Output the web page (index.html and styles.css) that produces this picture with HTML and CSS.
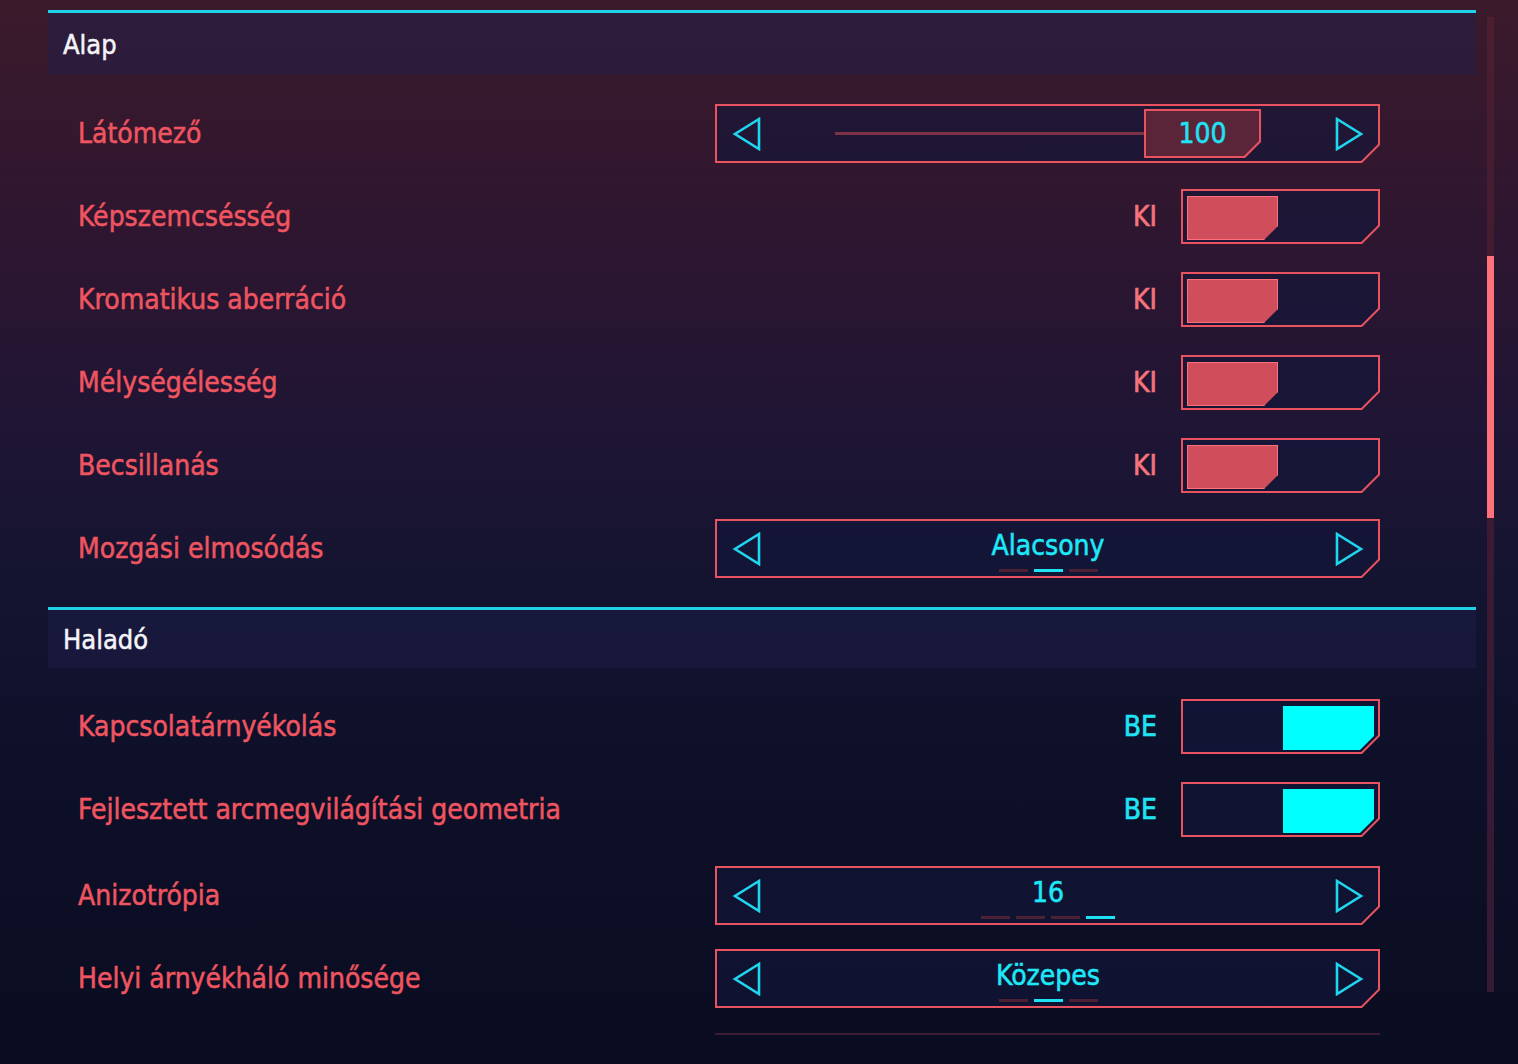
FILE: index.html
```html
<!DOCTYPE html>
<html lang="hu">
  <head>
    <meta charset="UTF-8" />
    <meta name="viewport" content="width=device-width, initial-scale=1.0" />
    <title>Grafika beállítások</title>
    <link rel="stylesheet" href="styles.css">
  </head>
  <body>
    <div class="screen">
      <div class="panel">
        <section class="group">
          <h2 class="group-title">Alap</h2>
          <div class="rows">
            <div class="row">
              <span class="label">Látómező</span>
              <div class="frame wide">
                <div class="frame-inner picker">
                  <svg class="arrow" viewBox="0 0 30 34"><polygon points="27,2 3,17 27,32" /></svg>
                  <div class="slider">
                    <div class="slider-line"></div>
                    <div class="thumb"><div class="thumb-inner">100</div></div>
                  </div>
                  <svg class="arrow" viewBox="0 0 30 34"><polygon points="3,2 27,17 3,32" /></svg>
                </div>
              </div>
            </div>
            <div class="row">
              <span class="label">Képszemcsésség</span>
              <span class="state">KI</span>
              <div class="frame toggle">
                <div class="frame-inner switch"><div class="knob"></div></div>
              </div>
            </div>
            <div class="row">
              <span class="label">Kromatikus aberráció</span>
              <span class="state">KI</span>
              <div class="frame toggle">
                <div class="frame-inner switch"><div class="knob"></div></div>
              </div>
            </div>
            <div class="row">
              <span class="label">Mélységélesség</span>
              <span class="state">KI</span>
              <div class="frame toggle">
                <div class="frame-inner switch"><div class="knob"></div></div>
              </div>
            </div>
            <div class="row">
              <span class="label">Becsillanás</span>
              <span class="state">KI</span>
              <div class="frame toggle">
                <div class="frame-inner switch"><div class="knob"></div></div>
              </div>
            </div>
            <div class="row">
              <span class="label">Mozgási elmosódás</span>
              <div class="frame wide">
                <div class="frame-inner picker">
                  <svg class="arrow" viewBox="0 0 30 34"><polygon points="27,2 3,17 27,32" /></svg>
                  <div class="choice">
                    <span class="value">Alacsony</span>
                    <div class="dashes"><i></i><i class="on"></i><i></i></div>
                  </div>
                  <svg class="arrow" viewBox="0 0 30 34"><polygon points="3,2 27,17 3,32" /></svg>
                </div>
              </div>
            </div>
          </div>
        </section>

        <section class="group">
          <h2 class="group-title small">Haladó</h2>
          <div class="rows">
            <div class="row">
              <span class="label">Kapcsolatárnyékolás</span>
              <span class="state on">BE</span>
              <div class="frame toggle">
                <div class="frame-inner switch on"><div class="knob"></div></div>
              </div>
            </div>
            <div class="row">
              <span class="label">Fejlesztett arcmegvilágítási geometria</span>
              <span class="state on">BE</span>
              <div class="frame toggle">
                <div class="frame-inner switch on"><div class="knob"></div></div>
              </div>
            </div>
            <div class="row tall">
              <span class="label">Anizotrópia</span>
              <div class="frame wide">
                <div class="frame-inner picker">
                  <svg class="arrow" viewBox="0 0 30 34"><polygon points="27,2 3,17 27,32" /></svg>
                  <div class="choice">
                    <span class="value">16</span>
                    <div class="dashes"><i></i><i></i><i></i><i class="on"></i></div>
                  </div>
                  <svg class="arrow" viewBox="0 0 30 34"><polygon points="3,2 27,17 3,32" /></svg>
                </div>
              </div>
            </div>
            <div class="row">
              <span class="label">Helyi árnyékháló minősége</span>
              <div class="frame wide">
                <div class="frame-inner picker">
                  <svg class="arrow" viewBox="0 0 30 34"><polygon points="27,2 3,17 27,32" /></svg>
                  <div class="choice">
                    <span class="value">Közepes</span>
                    <div class="dashes"><i></i><i class="on"></i><i></i></div>
                  </div>
                  <svg class="arrow" viewBox="0 0 30 34"><polygon points="3,2 27,17 3,32" /></svg>
                </div>
              </div>
            </div>
            <div class="row ghost">
              <div class="ghost-line"></div>
            </div>
          </div>
        </section>
      </div>

      <div class="scrollbar">
        <div class="scroll-thumb"></div>
      </div>
    </div>
  </body>
</html>
```

FILE: styles.css
```css
* {
  margin: 0;
  padding: 0;
  box-sizing: border-box;
}
html, body {
  height: 100%;
  overflow: hidden;
}
body {
  font-family: "DejaVu Sans Condensed", "Noto Sans", sans-serif;
  background: linear-gradient(180deg, #3b1a2b 0%, #2e1630 22%, #1f1534 40%, #131430 56%, #0e1029 72%, #0a0c21 100%) fixed;
  color: #fff;
}
.screen {
  display: flex;
  padding-left: 48px;
}
.panel {
  width: 1428px;
  padding-top: 10px;
}
.group-title {
  height: 65px;
  display: flex;
  align-items: center;
  padding-left: 15px;
  border-top: 3px solid #1fd2e8;
  background: rgba(30, 32, 78, 0.45);
  font-size: 27px;
  font-weight: normal;
  -webkit-text-stroke: 0.5px currentColor;
  color: #f4f4f8;
}
.group-title.small {
  height: 61px;
}
.rows {
  padding: 17px 0 17px;
}
.row {
  height: 83px;
  display: flex;
  align-items: center;
  padding-left: 30px;
  padding-right: 96px;
}
.row.tall {
  height: 86px;
  padding-top: 3px;
}
.label {
  flex: 1;
  font-size: 28px;
  -webkit-text-stroke: 0.5px currentColor;
  color: #ef5560;
}
.state {
  font-size: 28px;
  -webkit-text-stroke: 0.6px currentColor;
  color: #f4747c;
  margin-right: 24px;
}
.state.on {
  color: #1fe3f5;
}

/* chamfered frames */
.frame {
  background: #e9525f;
  padding: 2px;
  clip-path: polygon(0 0, 100% 0, 100% calc(100% - 18px), calc(100% - 18px) 100%, 0 100%);
}
.frame-inner {
  height: 100%;
  background:
    linear-gradient(rgba(18, 22, 58, 0.6), rgba(18, 22, 58, 0.6)) fixed,
    linear-gradient(180deg, #3b1a2b 0%, #2e1630 22%, #1f1534 40%, #131430 56%, #0e1029 72%, #0a0c21 100%) fixed;
  clip-path: polygon(0 0, 100% 0, 100% calc(100% - 17px), calc(100% - 17px) 100%, 0 100%);
}
.frame.wide {
  width: 665px;
  height: 59px;
}
.frame.toggle {
  width: 199px;
  height: 55px;
}

.picker {
  display: flex;
  align-items: center;
  padding: 0 14px 0 15px;
}
.arrow {
  width: 30px;
  height: 34px;
  flex-shrink: 0;
}
.arrow polygon {
  fill: none;
  stroke: #1fd6ee;
  stroke-width: 2.6;
}

.slider {
  flex: 1;
  display: flex;
  align-items: center;
  margin: 0 73px;
}
.slider-line {
  flex: 1;
  height: 3px;
  background: #7e3246;
}
.thumb {
  width: 117px;
  height: 49px;
  padding: 2px;
  background: #e9525f;
  clip-path: polygon(0 0, 100% 0, 100% calc(100% - 16px), calc(100% - 16px) 100%, 0 100%);
}
.thumb-inner {
  height: 100%;
  display: flex;
  align-items: center;
  justify-content: center;
  background: #5a2439;
  clip-path: polygon(0 0, 100% 0, 100% calc(100% - 15px), calc(100% - 15px) 100%, 0 100%);
  font-size: 28px;
  -webkit-text-stroke: 0.5px currentColor;
  color: #1fe3f5;
}

.choice {
  flex: 1;
  display: flex;
  flex-direction: column;
  align-items: center;
  padding-top: 2px;
}
.value {
  font-size: 28px;
  line-height: 36px;
  -webkit-text-stroke: 0.5px currentColor;
  color: #1fe8f8;
}
.dashes {
  display: flex;
  gap: 6px;
  margin-top: 5px;
}
.dashes i {
  width: 29px;
  height: 3px;
  background: #4d2036;
}
.dashes i.on {
  background: #1fe3f5;
}

.switch {
  display: flex;
  padding: 5px 4px 2px 4px;
}
.knob {
  width: 91px;
  height: 44px;
  background: #d04d5b;
  border: 1px solid #ff707a;
  clip-path: polygon(0 0, 100% 0, 100% calc(100% - 14px), calc(100% - 14px) 100%, 0 100%);
}
.switch.on {
  justify-content: flex-end;
}
.switch.on .knob {
  background: #00ffff;
  border: none;
}

.row.ghost {
  height: 20px;
  justify-content: flex-end;
  align-items: flex-start;
  padding-top: 13px;
}
.ghost-line {
  width: 665px;
  height: 2px;
  background: #3e1c33;
}

.scrollbar {
  width: 7px;
  height: 975px;
  margin-left: 11px;
  margin-top: 17px;
  background: linear-gradient(180deg, #4b1e30 0%, #3c1a32 50%, #341a35 100%);
}
.scroll-thumb {
  height: 262px;
  margin-top: 239px;
  background: #ff717b;
}
```
